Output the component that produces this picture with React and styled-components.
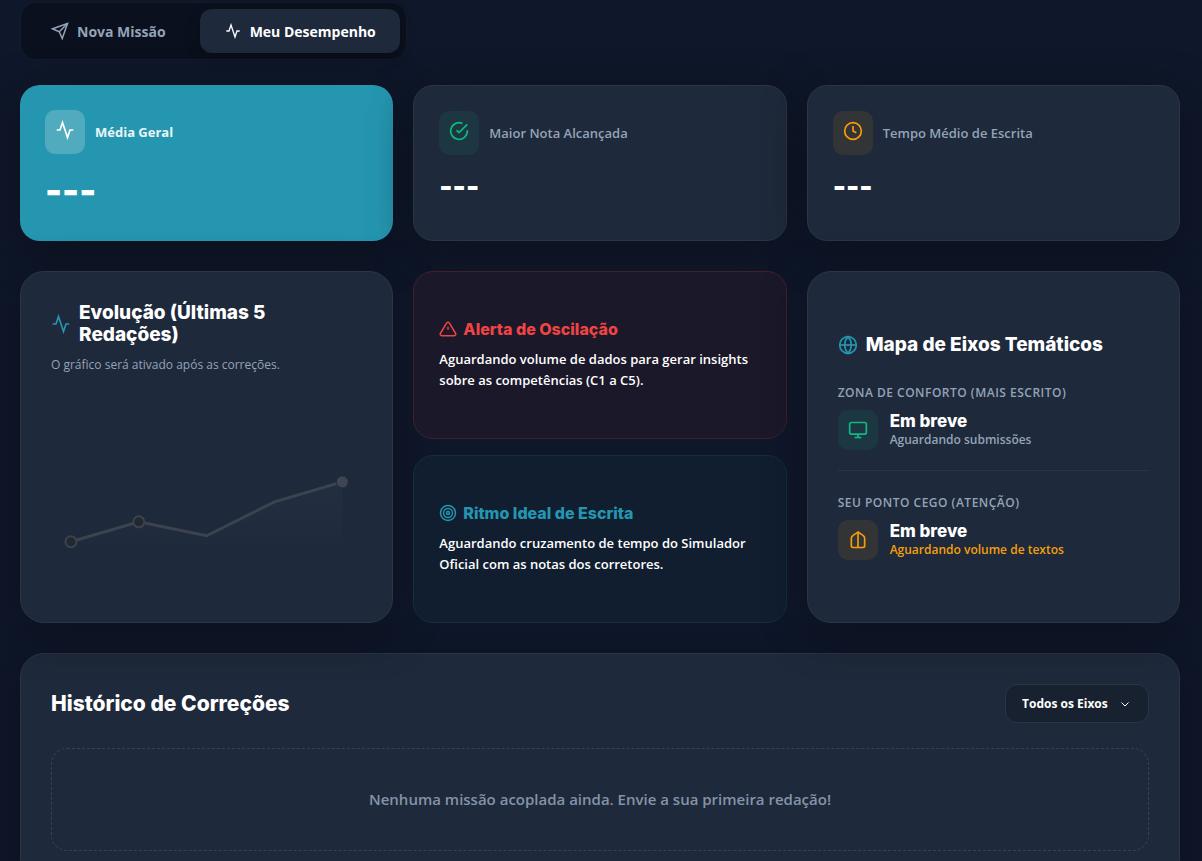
import React, { useState } from 'react'
import styled, { createGlobalStyle, css } from 'styled-components'

const sans = css`font-family: 'Open Sans', 'Noto Sans', sans-serif;`
const display = css`font-family: Inter, 'Open Sans', sans-serif;`

const Icon = ({ size = 20, children }) => (
  <svg width={size} height={size} viewBox="0 0 24 24" fill="none" stroke="currentColor" strokeWidth="2" aria-hidden="true">
    {children}
  </svg>
)

const ActivityIcon = ({ size }) => (
  <Icon size={size}>
    <polyline points="22 12 18 12 15 21 9 3 6 12 2 12" />
  </Icon>
)
const SendIcon = ({ size }) => (
  <Icon size={size}>
    <line x1="22" y1="2" x2="11" y2="13" />
    <polygon points="22 2 15 22 11 13 2 9 22 2" />
  </Icon>
)
const CheckIcon = () => (
  <Icon>
    <path d="M22 11.08V12a10 10 0 1 1-5.93-9.14" />
    <polyline points="22 4 12 14.01 9 11.01" />
  </Icon>
)
const ClockIcon = () => (
  <Icon>
    <circle cx="12" cy="12" r="10" />
    <polyline points="12 6 12 12 16 14" />
  </Icon>
)
const AlertIcon = ({ size }) => (
  <Icon size={size}>
    <path d="M10.29 3.86L1.82 18a2 2 0 0 0 1.71 3h16.94a2 2 0 0 0 1.71-3L13.71 3.86a2 2 0 0 0-3.42 0z" />
    <line x1="12" y1="9" x2="12" y2="13" />
  </Icon>
)
const TargetIcon = ({ size }) => (
  <Icon size={size}>
    <circle cx="12" cy="12" r="10" />
    <circle cx="12" cy="12" r="6" />
    <circle cx="12" cy="12" r="2" />
  </Icon>
)
const GlobeIcon = () => (
  <Icon>
    <circle cx="12" cy="12" r="10" />
    <line x1="2" y1="12" x2="22" y2="12" />
    <path d="M12 2a15.3 15.3 0 0 1 4 10 15.3 15.3 0 0 1-4 10 15.3 15.3 0 0 1-4-10 15.3 15.3 0 0 1 4-10z" />
  </Icon>
)
const MonitorIcon = () => (
  <Icon>
    <rect x="2" y="3" width="20" height="14" rx="2" />
    <line x1="8" y1="21" x2="16" y2="21" />
    <line x1="12" y1="17" x2="12" y2="21" />
  </Icon>
)
const BlindSpotIcon = () => (
  <Icon>
    <path d="M12 2.500L6 6.500a4 4 0 0 0-2 3.500V19a2 2 0 0 0 2 2h12a2 2 0 0 0 2-2V10a4 4 0 0 0-2-3.500z" />
    <line x1="12" y1="2" x2="12" y2="21" />
  </Icon>
)
const ChevronIcon = () => (
  <Icon size={12}>
    <polyline points="5 9 12 16 19 9" />
  </Icon>
)

const stats = [
  { label: 'Média Geral', value: '---', icon: <ActivityIcon />, tone: 'main' },
  { label: 'Maior Nota Alcançada', value: '---', icon: <CheckIcon />, tone: 'green' },
  { label: 'Tempo Médio de Escrita', value: '---', icon: <ClockIcon />, tone: 'amber' },
]

const tones = {
  main: { color: '#ffffff', bg: 'rgba(255, 255, 255, 0.2)' },
  green: { color: '#10b981', bg: 'rgba(16, 185, 129, 0.1)' },
  amber: { color: '#f59e0b', bg: 'rgba(245, 158, 11, 0.1)' },
}

function App() {
  const [tab, setTab] = useState('desempenho')

  return (
    <Page>
      <GlobalStyle />
      <Tabs>
        <Tab $active={tab === 'missao'} onClick={() => setTab('missao')}>
          <SendIcon size={18} />
          Nova Missão
        </Tab>
        <Tab $active={tab === 'desempenho'} onClick={() => setTab('desempenho')}>
          <ActivityIcon size={16} />
          Meu Desempenho
        </Tab>
      </Tabs>

      <Grid>
        {stats.map((stat) => (
          <StatCard key={stat.label} $main={stat.tone === 'main'}>
            <StatHead>
              <StatIcon $tone={stat.tone}>{stat.icon}</StatIcon>
              <StatLabel $main={stat.tone === 'main'}>{stat.label}</StatLabel>
            </StatHead>
            <StatValue $main={stat.tone === 'main'}>{stat.value}</StatValue>
          </StatCard>
        ))}
      </Grid>

      <Grid>
        <Panel>
          <PanelTitle>
            <ActivityIcon />
            <span>Evolução (Últimas 5 Redações)</span>
          </PanelTitle>
          <PanelNote>O gráfico será ativado após as correções.</PanelNote>
          <Chart viewBox="0 0 312 130" aria-hidden="true">
            <defs>
              <linearGradient id="area" x1="0" y1="0" x2="0" y2="1">
                <stop offset="0" stopColor="#6b7280" stopOpacity="0.07" />
                <stop offset="1" stopColor="#6b7280" stopOpacity="0" />
              </linearGradient>
            </defs>
            <path d="M20 100L88 80L156 94L224 60L292 40V114H20Z" fill="url(#area)" />
            <polyline points="20,100 88,80 156,94 224,60 292,40" fill="none" stroke="#3c434f" strokeWidth="3" />
            <circle cx="20" cy="100" r="5.5" fill="#212830" stroke="#3c434f" strokeWidth="2" />
            <circle cx="88" cy="80" r="5.5" fill="#212830" stroke="#3c434f" strokeWidth="2" />
            <circle cx="292" cy="40" r="6" fill="#3f4653" stroke="#212a36" strokeWidth="1" />
          </Chart>
        </Panel>

        <Stack>
          <Insight $tone="red">
            <InsightTitle $color="#ef4444">
              <AlertIcon size={18} />
              Alerta de Oscilação
            </InsightTitle>
            <InsightText>Aguardando volume de dados para gerar insights sobre as competências (C1 a C5).</InsightText>
          </Insight>
          <Insight $tone="blue">
            <InsightTitle $color="#2596b0">
              <TargetIcon size={18} />
              Ritmo Ideal de Escrita
            </InsightTitle>
            <InsightText>Aguardando cruzamento de tempo do Simulador Oficial com as notas dos corretores.</InsightText>
          </Insight>
        </Stack>

        <Panel $center>
          <PanelTitle>
            <GlobeIcon />
            <span>Mapa de Eixos Temáticos</span>
          </PanelTitle>
          <AxisList>
            <Axis>
              <AxisLabel>Zona de Conforto (Mais Escrito)</AxisLabel>
              <AxisRow>
                <AxisIcon $tone="green"><MonitorIcon /></AxisIcon>
                <div>
                  <AxisName>Em breve</AxisName>
                  <AxisNote>Aguardando submissões</AxisNote>
                </div>
              </AxisRow>
            </Axis>
            <Axis>
              <AxisLabel>Seu Ponto Cego (Atenção)</AxisLabel>
              <AxisRow>
                <AxisIcon $tone="amber"><BlindSpotIcon /></AxisIcon>
                <div>
                  <AxisName>Em breve</AxisName>
                  <AxisNote $warn>Aguardando volume de textos</AxisNote>
                </div>
              </AxisRow>
            </Axis>
          </AxisList>
        </Panel>
      </Grid>

      <History>
        <HistoryHead>
          <HistoryTitle>Histórico de Correções</HistoryTitle>
          <Filter>
            <select aria-label="Filtrar por eixo" defaultValue="todos">
              <option value="todos">Todos os Eixos</option>
            </select>
            <ChevronIcon />
          </Filter>
        </HistoryHead>
        <Empty>Nenhuma missão acoplada ainda. Envie a sua primeira redação!</Empty>
      </History>
    </Page>
  )
}

export default App

const GlobalStyle = createGlobalStyle`
  * {
    box-sizing: border-box;
  }
  html {
    background: #0f172a;
    overflow-x: hidden;
    scrollbar-width: none;
  }
  body {
    margin: 0;
    color: #fff;
    ${sans}
  }
  h2, h3, p {
    margin: 0;
  }
  svg {
    flex-shrink: 0;
  }
`
const Page = styled.main`
  padding: 2px 22px 30px 20px;
`
const Tabs = styled.nav`
  display: inline-flex;
  gap: 10px;
  padding: 6px;
  margin-bottom: 25px;
  background: #0b101e;
  border: 1px solid #151b29;
  border-radius: 16px;
  vertical-align: top;
`
const Tab = styled.button`
  display: flex;
  align-items: center;
  gap: 8px;
  height: 44px;
  padding: 0 24px;
  border: 0;
  border-radius: 12px;
  background: ${(props) => (props.$active ? '#1e293b' : 'transparent')};
  color: ${(props) => (props.$active ? '#fff' : '#94a3b8')};
  box-shadow: ${(props) => (props.$active ? '0 4px 15px rgba(0, 0, 0, 0.2)' : 'none')};
  font-size: 14px;
  font-weight: 700;
  ${sans}
  cursor: pointer;

  svg {
    width: 18px;
  }
`
const Grid = styled.section`
  display: grid;
  grid-template-columns: repeat(3, 1fr);
  gap: 20px;
  margin-bottom: 30px;

  @media (max-width: 900px) {
    grid-template-columns: 1fr;
  }
`
const card = css`
  background: #1e293b;
  border: 1px solid #2a3545;
  border-radius: 24px;
  box-shadow: 0 10px 40px rgba(11, 15, 25, 0.7);
`
const StatCard = styled.article`
  ${card}
  border-radius: 20px;
  min-height: 156px;
  padding: 25px;
  ${(props) => props.$main && css`
    background: #2596b0;
    border: 0;
  `}
`
const StatHead = styled.div`
  display: flex;
  align-items: center;
  gap: 10px;
  margin-bottom: 15px;
`
const StatIcon = styled.div`
  width: 40px;
  height: 44px;
  padding-top: 10px;
  border-radius: 10px;
  text-align: center;
  line-height: 20px;
  color: ${(props) => tones[props.$tone].color};
  background: ${(props) => tones[props.$tone].bg};
`
const StatLabel = styled.span`
  font-size: 13px;
  font-weight: ${(props) => (props.$main ? 700 : 600)};
  color: ${(props) => (props.$main ? '#e9f5f7' : '#94a3b8')};
`
const StatValue = styled.div`
  ${display}
  font-size: ${(props) => (props.$main ? 36 : 28)}px;
  line-height: ${(props) => (props.$main ? 42 : 32)}px;
  font-weight: 900;
`
const Panel = styled.article`
  ${card}
  display: flex;
  flex-direction: column;
  justify-content: ${(props) => (props.$center ? 'center' : 'flex-start')};
  min-height: 352px;
  padding: 30px;
`
const PanelTitle = styled.h3`
  display: flex;
  align-items: center;
  gap: 8px;
  ${display}
  font-size: 19px;
  line-height: 22px;
  font-weight: 800;

  svg {
    color: #2596b0;
  }
`
const PanelNote = styled.p`
  margin-top: 10px;
  font-size: 12px;
  line-height: 18px;
  font-weight: 500;
  color: #94a3b8;
`
const Chart = styled.svg`
  width: 100%;
  margin-top: auto;
  margin-bottom: 20px;
`
const Stack = styled.div`
  display: flex;
  flex-direction: column;
  gap: 16px;
`
const Insight = styled.article`
  flex: 1;
  display: flex;
  flex-direction: column;
  justify-content: center;
  gap: 10px;
  padding: 25px;
  border-radius: 20px;
  border: 1px solid ${(props) => (props.$tone === 'red' ? '#40202f' : '#132f40')};
  background: ${(props) => (props.$tone === 'red' ? '#1b1829' : '#101e30')};
`
const InsightTitle = styled.h3`
  display: flex;
  align-items: center;
  gap: 6px;
  ${display}
  font-size: 16px;
  line-height: 20px;
  font-weight: 800;
  color: ${(props) => props.$color};
`
const InsightText = styled.p`
  font-size: 13px;
  line-height: 21px;
  font-weight: 600;
`
const AxisList = styled.div`
  padding-top: 5px;
`
const Axis = styled.div`
  padding-bottom: 20px;
  margin-top: 23px;
  border-bottom: 1px solid #2a3545;

  &:last-child {
    padding-bottom: 0;
    border-bottom: 0;
  }
`
const AxisLabel = styled.p`
  margin-bottom: 8px;
  font-size: 12px;
  line-height: 18px;
  font-weight: 600;
  letter-spacing: 0.5px;
  text-transform: uppercase;
  color: #94a3b8;
`
const AxisRow = styled.div`
  display: flex;
  align-items: center;
  gap: 12px;
`
const AxisIcon = styled.div`
  display: flex;
  align-items: center;
  justify-content: center;
  width: 40px;
  height: 40px;
  border-radius: 10px;
  color: ${(props) => tones[props.$tone].color};
  background: ${(props) => tones[props.$tone].bg};
`
const AxisName = styled.p`
  ${display}
  font-size: 17px;
  line-height: 20px;
  font-weight: 800;
`
const AxisNote = styled.p`
  font-size: 12px;
  line-height: 18px;
  font-weight: 600;
  color: ${(props) => (props.$warn ? '#f59e0b' : '#94a3b8')};
`
const History = styled.section`
  ${card}
  padding: 30px;
`
const HistoryHead = styled.div`
  display: flex;
  align-items: center;
  justify-content: space-between;
  margin-bottom: 25px;
`
const HistoryTitle = styled.h2`
  ${display}
  font-size: 21px;
  line-height: 26px;
  font-weight: 800;
`
const Filter = styled.div`
  display: flex;
  align-items: center;
  position: relative;

  select {
    appearance: none;
    height: 39px;
    padding: 0 40px 0 16px;
    border: 1px solid #2b3543;
    border-radius: 12px;
    background: #18212f;
    color: #fff;
    font-size: 12px;
    font-weight: 700;
    ${sans}
  }
  svg {
    position: absolute;
    right: 18px;
    pointer-events: none;
  }
`
const Empty = styled.p`
  padding: 40px 20px;
  border: 1px dashed #374253;
  border-radius: 16px;
  text-align: center;
  font-size: 15px;
  line-height: 21px;
  font-weight: 600;
  color: #8593a8;
`
